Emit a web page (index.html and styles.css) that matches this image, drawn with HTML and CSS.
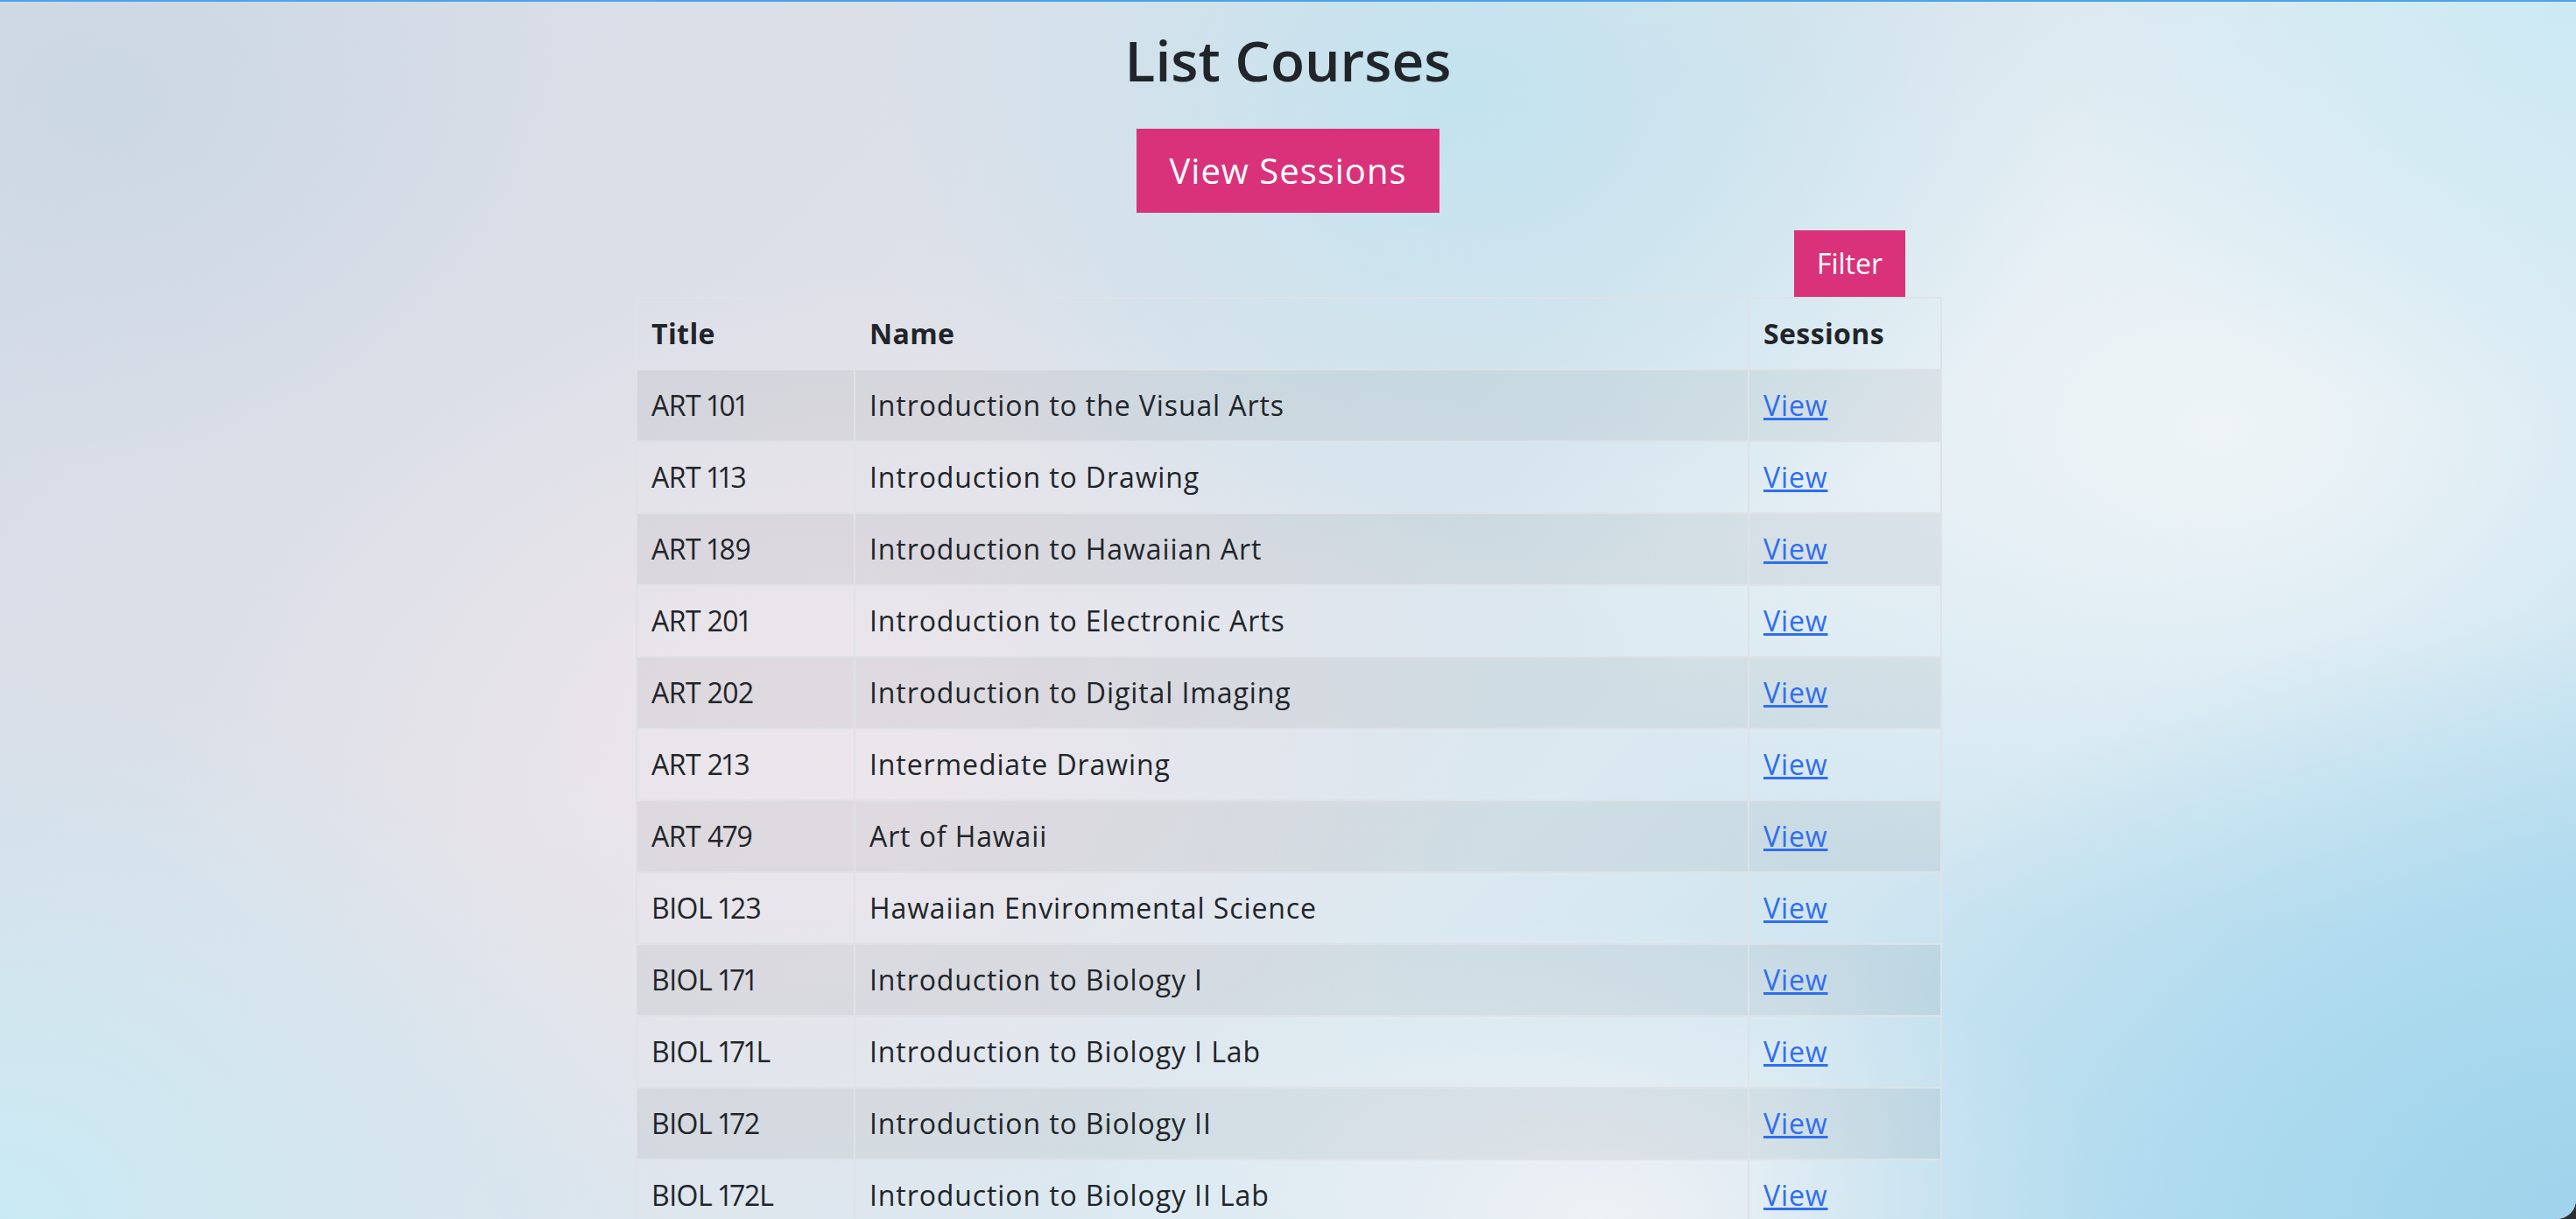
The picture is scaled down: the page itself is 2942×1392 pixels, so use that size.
FILE: index.html
```html
<!DOCTYPE html>
<html>
<head>
  <title>List Courses</title>
  <link rel="stylesheet" href="styles.css">
</head>
<body>
<div class="window">
  <h1 class="page-title">List Courses</h1>
  <div class="actions">
    <a class="btn btn-lg" href="#">View Sessions</a>
  </div>

  <div class="courses">
    <div class="toolbar">
      <a class="btn" href="#">Filter</a>
    </div>
    <table class="course-table">
      <colgroup>
        <col class="col-title">
        <col class="col-name">
        <col class="col-sessions">
      </colgroup>
      <thead>
        <tr><th>Title</th><th>Name</th><th>Sessions</th></tr>
      </thead>
      <tbody>
        <tr><td>ART 101</td><td>Introduction to the Visual Arts</td><td><a href="#">View</a></td></tr>
        <tr><td>ART 113</td><td>Introduction to Drawing</td><td><a href="#">View</a></td></tr>
        <tr><td>ART 189</td><td>Introduction to Hawaiian Art</td><td><a href="#">View</a></td></tr>
        <tr><td>ART 201</td><td>Introduction to Electronic Arts</td><td><a href="#">View</a></td></tr>
        <tr><td>ART 202</td><td>Introduction to Digital Imaging</td><td><a href="#">View</a></td></tr>
        <tr><td>ART 213</td><td>Intermediate Drawing</td><td><a href="#">View</a></td></tr>
        <tr><td>ART 479</td><td>Art of Hawaii</td><td><a href="#">View</a></td></tr>
        <tr><td>BIOL 123</td><td>Hawaiian Environmental Science</td><td><a href="#">View</a></td></tr>
        <tr><td>BIOL 171</td><td>Introduction to Biology I</td><td><a href="#">View</a></td></tr>
        <tr><td>BIOL 171L</td><td>Introduction to Biology I Lab</td><td><a href="#">View</a></td></tr>
        <tr><td>BIOL 172</td><td>Introduction to Biology II</td><td><a href="#">View</a></td></tr>
        <tr><td>BIOL 172L</td><td>Introduction to Biology II Lab</td><td><a href="#">View</a></td></tr>
      </tbody>
    </table>
  </div>
</div>
</body>
</html>
```

FILE: styles.css
```css
html, body {
  margin: 0;
  height: 100%;
  background: #2e2e30;
}

body {
  font-family: "Open Sans", "Noto Sans", sans-serif;
  font-size: 32px;
  line-height: 1.5;
  color: #212529;
}

.window {
  height: 100vh;
  box-sizing: border-box;
  overflow: hidden;
  border-top: 2px solid #4ba3ea;
  border-bottom-right-radius: 22px;
  padding-top: 29px;
  background:
    radial-gradient(ellipse 32% 50% at 100% 100%, #9ed4ec 0%, rgba(158, 212, 236, 0) 100%),
    radial-gradient(ellipse 26% 45% at 0% 100%, #c9eaf4 0%, rgba(201, 234, 244, 0) 100%),
    radial-gradient(ellipse 24% 40% at 57% 8%, #c2e3ef 0%, rgba(194, 227, 239, 0) 100%),
    radial-gradient(ellipse 22% 35% at 100% 0%, #cdeaf4 0%, rgba(205, 234, 244, 0) 100%),
    radial-gradient(ellipse 28% 42% at 86% 35%, #eef4f7 0%, rgba(238, 244, 247, 0) 100%),
    radial-gradient(ellipse 26% 40% at 32% 62%, #ece6eb 0%, rgba(236, 230, 235, 0) 100%),
    radial-gradient(ellipse 20% 25% at 62% 100%, #eef1f5 0%, rgba(238, 241, 245, 0) 100%),
    radial-gradient(ellipse 18% 30% at 4% 8%, #ccd8e4 0%, rgba(204, 216, 228, 0) 100%),
    linear-gradient(135deg, #d3dbe6 0%, #e0e1e9 35%, #dbe9f1 62%, #b6def0 100%);
}

.page-title {
  margin: 0 0 39px;
  text-align: center;
  font-size: 64px;
  font-weight: 600;
  line-height: 1.2;
}

.actions {
  display: flex;
  justify-content: center;
}

.btn {
  display: inline-block;
  padding: 12px 24px;
  border: 2px solid #d9327a;
  background: #d9327a;
  color: #fff;
  font-size: 32px;
  line-height: 48px;
  text-decoration: none;
}

.btn-lg {
  padding: 16px 35px;
  font-size: 40px;
  line-height: 60px;
  letter-spacing: 1px;
}

.courses {
  width: 1490px;
  margin: 20px auto 0;
}

.toolbar {
  display: flex;
  justify-content: flex-end;
  padding-right: 40px;
}

.course-table {
  width: 1490px;
  table-layout: fixed;
  border-collapse: collapse;
  letter-spacing: 0.9px;
  font-variant-numeric: proportional-nums;
}

.col-title { width: 249px; }
.col-name { width: 1021px; }
.col-sessions { width: 220px; }

.course-table th,
.course-table td {
  padding: 16px;
  border: 2px solid #dfe2e7;
  text-align: left;
  vertical-align: top;
}

.course-table td:first-child {
  letter-spacing: -0.5px;
}

.course-table th {
  font-weight: 700;
  letter-spacing: 0.4px;
}

.course-table tbody tr:nth-child(odd) {
  background-color: rgba(0, 0, 0, 0.05);
}

.course-table a {
  color: #2f6ef0;
}
```
